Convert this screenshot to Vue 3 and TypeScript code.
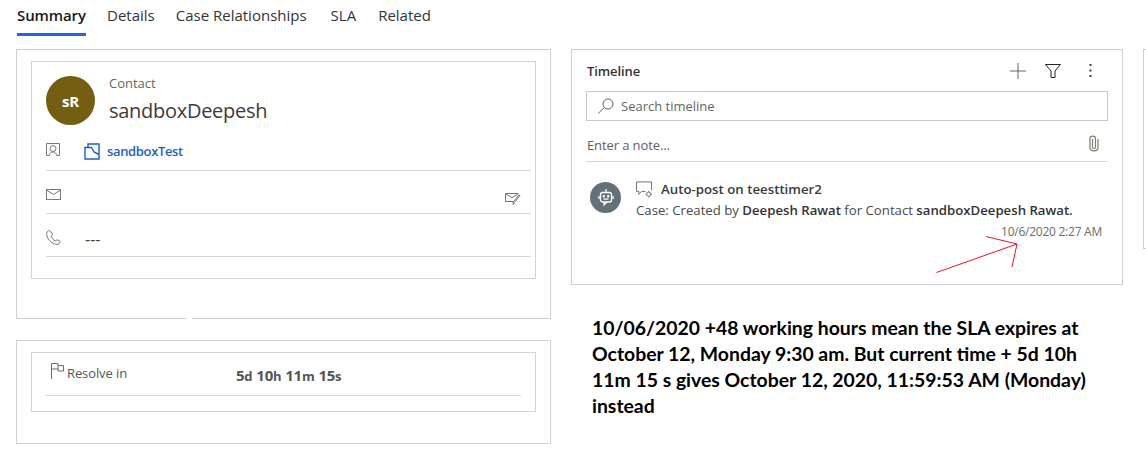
<script setup lang="ts">
interface Part { value: string; unit: string }
const tabs: string[] = ['Summary', 'Details', 'Case Relationships', 'SLA', 'Related']
const timer: Part[] = [
  { value: '5', unit: 'd' },
  { value: '10', unit: 'h' },
  { value: '11', unit: 'm' },
  { value: '15', unit: 's' },
]
</script>

<template>
  <div class="page">
    <nav class="tabs">
      <span v-for="(t, i) in tabs" :key="t" class="tab" :class="{ active: i === 0 }">{{ t }}</span>
    </nav>
    <div class="main">
      <div class="left">
        <section class="card top-card">
          <div class="inner contact">
            <div class="head">
              <div class="avatar">sR</div>
              <div class="who">
                <div class="label">Contact</div>
                <div class="name">sandboxDeepesh</div>
              </div>
            </div>
            <div class="row r1">
              <svg class="ic" width="14" height="14" viewBox="0 0 14 14" fill="none" stroke="#7d7672">
                <path d="M3 12.500H.5V.5h13v12H11" />
                <circle cx="7" cy="5.500" r="3" />
                <path d="M3 13c.5-2.500 2-4 4-4s3.500 1.500 4 4" />
              </svg>
              <svg class="link-ic" width="16" height="17" viewBox="0 0 16 17" fill="none" stroke="#1f5fbf" stroke-width="1.400">
                <path d="M4 4.500V1h11v15H1V4.500h6.500l2.500 4.500 5 2.500" />
              </svg>
              <span class="link">sandboxTest</span>
            </div>
            <div class="row r2">
              <svg width="15" height="11" viewBox="0 0 15 11" fill="none" stroke="#7d7672">
                <rect x="0.500" y="0.500" width="14" height="10" />
                <path d="M1 1.500l6.500 4 6.500-4" />
              </svg>
              <svg class="mail-edit" width="16" height="13" viewBox="0 0 16 13" fill="none" stroke="#77726e">
                <path d="M8 9.500H.5V1.500h13" />
                <path d="M1 2l6 3.500 6-3.500" />
                <path d="M15 3.500L9.500 10.500l-1.500 2 .3-2.500L13.800 3z" />
              </svg>
            </div>
            <div class="row r3">
              <svg class="ic" width="15" height="15" viewBox="0 0 15 15" fill="none" stroke="#7d7672">
                <path d="M2.500.8L.8 2.300c-.4 3 .7 6 2.700 8.300 2.300 2.500 5.500 4 8.500 3.800l2-1.700c.4-.4.400-1-.1-1.300l-2.300-1.500c-.4-.3-.9-.2-1.200.1l-.9 1c-1.800-.6-3.800-2.800-4.400-5l1.100-.8c.4-.3.500-.8.300-1.200L4 .9C3.600.4 3 .4 2.500.8z" />
              </svg>
              <span class="dash">---</span>
            </div>
          </div>
          <i class="notch"></i>
        </section>
        <section class="card sla-card">
          <div class="inner sla">
            <div class="sla-row">
              <svg class="flag" width="13" height="16" viewBox="0 0 13 16" fill="none" stroke="#6f6b68">
                <path d="M.5 16V.5h6.500v2h5.500v5.500H7V6H.5M7 2.500V6" />
              </svg>
              <span class="resolve">Resolve in</span>
              <span class="timer">
                <span v-for="p in timer" :key="p.unit" class="part">{{ p.value }}<small>{{ p.unit }}</small></span>
              </span>
            </div>
          </div>
        </section>
      </div>

      <div class="right">
        <section class="card timeline">
          <header class="tl-head">
            <span class="tl-title">Timeline</span>
            <div class="tl-tools">
              <svg class="plus" width="16" height="16" viewBox="0 0 16 16" stroke="#6b6460" fill="none"><path d="M0 8h16M8 0v16" /></svg>
              <svg class="funnel" width="16" height="14" viewBox="0 0 16 14" stroke="#1f1f33" fill="none"><path d="M.5.500h15L10 7v6.500H6V7z" /></svg>
              <svg class="dots" width="3" height="13" viewBox="0 0 3 13" fill="#3b3a4a"><rect x="0.500" y="0" width="2" height="2" /><rect x="0.500" y="5.500" width="2" height="2" /><rect x="0.500" y="11" width="2" height="2" /></svg>
            </div>
          </header>
          <div class="search">
            <svg width="18" height="16" viewBox="0 0 18 16" fill="none" stroke="#66615e"><circle cx="11" cy="6" r="5" /><path d="M7.500 9.500L1 15.500" /></svg>
            <span>Search timeline</span>
          </div>
          <div class="note">
            <span>Enter a note...</span>
            <svg class="clip" width="10" height="17" viewBox="0 0 10 17" fill="none" stroke="#7b7d6f" stroke-width="1.200"><path d="M3.500 4v8c0 2 3 2 3 0V3C6.500.5 1 .5 1 3v9.500c0 4.500 8 4.500 8 0V4" /></svg>
          </div>
          <article class="post">
            <div class="bot">
              <svg width="16" height="18" viewBox="0 0 16 18" fill="none" stroke="#fff" stroke-width="1.300">
                <path d="M8 0v3" />
                <rect x="2.500" y="3.500" width="11" height="9.500" rx="2" />
                <path d="M1 7v3M15 7v3M6 13v3l3-3" />
                <circle cx="5.800" cy="7.300" r=".6" fill="#fff" />
                <circle cx="10.200" cy="7.300" r=".6" fill="#fff" />
                <path d="M5.500 10h5" />
              </svg>
            </div>
            <div class="post-body">
              <div class="post-title">
                <svg width="17" height="17" viewBox="0 0 18 17" fill="none" stroke="#6e6a67">
                  <path d="M10 10.500H6l-3 3v-3H.5V.5h16v9" />
                  <circle cx="13.500" cy="13.500" r="2.200" />
                  <path d="M13.500 10v1.300M13.500 15.700V17M10 13.500h1.300M15.700 13.500H17" />
                </svg>
                <span>Auto-post on teesttimer2</span>
              </div>
              <div class="post-text">Case: Created by <b>Deepesh Rawat</b> for Contact <b>sandboxDeepesh Rawat.</b></div>
              <div class="post-time">10/6/2020 2:27 AM</div>
            </div>
          </article>
        </section>
        <p class="remark">10/06/2020 +48 working hours mean the SLA expires at October 12, Monday 9:30 am. But current time + 5d 10h 11m 15 s gives October 12, 2020, 11:59:53 AM (Monday) instead</p>
      </div>
      <section class="card stub"></section>
    </div>

    <svg class="arrow" width="100" height="50" viewBox="930 230 100 50" fill="none" stroke="#e8112d">
      <path d="M936.500 272.500L1017 244M986 236.500L1017 244L1012 267" />
    </svg>
  </div>
</template>

<style>
html, body { margin: 0; background: #fff; }
</style>

<style scoped>
.page {
  position: relative;
  width: 1146px;
  height: 463px;
  overflow: hidden;
  background: #fff;
  font-family: "Open Sans", "Noto Sans", sans-serif;
  color: #323130;
}
.tabs {
  display: flex;
  gap: 21px;
  height: 36px;
  padding-left: 17px;
  box-sizing: border-box;
}
.tab {
  height: 36px;
  box-sizing: border-box;
  padding-top: 5px;
  font-size: 15px;
  line-height: 20px;
  color: #333;
  white-space: nowrap;
}
.tab:nth-child(4) { margin-left: 3px; }
.tab:nth-child(5) { margin-left: 1px; }
.tab.active {
  width: 69px;
  font-weight: 600;
  letter-spacing: -0.1px;
  color: #1a1a1a;
  border-bottom: 3px solid #2266e3;
}
.main {
  display: flex;
  gap: 20px;
  padding: 13px 0 0 16px;
}
.card {
  border: 1px solid #cfcfcf;
  box-sizing: border-box;
  position: relative;
}
.left {
  width: 535px;
  flex: none;
  display: flex;
  flex-direction: column;
  gap: 21px;
}
.top-card {
  height: 270px;
  padding: 11px 14px 0;
}
.inner {
  border: 1px solid #d4d4d4;
  box-sizing: border-box;
}
.contact {
  height: 218px;
  padding: 0 4px 0 14px;
}
.head {
  display: flex;
  gap: 14px;
  height: 81px;
  padding-top: 14px;
  box-sizing: border-box;
}
.avatar {
  width: 49px;
  height: 49px;
  border-radius: 50%;
  background: #745e11;
  color: #fff;
  font-weight: 700;
  font-size: 15px;
  letter-spacing: -0.3px;
  display: flex;
  align-items: center;
  justify-content: center;
}
.label {
  font-size: 13px;
  line-height: 16px;
  color: #666;
  margin-top: -1px;
}
.name {
  font-size: 20px;
  line-height: 28px;
  margin-top: 6px;
  color: #3e3c3b;
  letter-spacing: -0.28px;
}
.row {
  display: flex;
  align-items: center;
  border-bottom: 1px solid #d6d6d6;
  box-sizing: border-box;
}
.r1 { height: 28px; align-items: flex-start; }
.r2 {
  height: 43px;
  align-items: flex-start;
  justify-content: space-between;
  padding: 18px 10px 0 0;
}
.r3 { height: 43px; align-items: flex-start; padding-top: 16px; }
.link-ic { margin-left: 24px; margin-right: 7px; }
.link {
  font-size: 13px;
  font-weight: 600;
  line-height: 16px;
  color: #1f5fbf;
  letter-spacing: -0.35px;
}
.mail-edit { margin-top: 3px; }
.dash {
  margin-left: 24px;
  font-size: 16px;
  line-height: 20px;
  margin-top: -1px;
  color: #444;
}
.notch {
  position: absolute;
  left: 169px;
  bottom: -1px;
  width: 6px;
  height: 1px;
  background: #fff;
}
.sla-card {
  height: 104px;
  padding: 11px 14px 0;
}
.sla {
  height: 60px;
  padding: 0 14px 0 14px;
}
.sla-row {
  height: 43px;
  display: flex;
  align-items: flex-start;
  border-bottom: 1px solid #d6d6d6;
  box-sizing: border-box;
  padding: 10px 0 0 5px;
}
.flag { margin-right: 3px; }
.resolve {
  font-size: 13px;
  line-height: 20px;
  color: #555;
  width: 169px;
  letter-spacing: -0.1px;
}
.timer {
  display: flex;
  gap: 4px;
  font-size: 15px;
  font-weight: 700;
  line-height: 24px;
  color: #555;
  letter-spacing: -0.25px;
}
.timer small { font-size: 13px; }
.right {
  width: 552px;
  flex: none;
}
.timeline {
  height: 236px;
  padding: 0 14px;
}
.tl-head {
  display: flex;
  justify-content: space-between;
  align-items: center;
  height: 41px;
}
.tl-title {
  padding-left: 1px;
  font-size: 13px;
  font-weight: 600;
  color: #333;
  letter-spacing: -0.1px;
}
.tl-tools {
  display: flex;
  align-items: center;
  gap: 20px;
  padding-right: 16px;
}
.plus { margin-right: -1px; }
.dots { margin-left: 8px; }
.search {
  height: 30px;
  border: 1px solid #c8c8c8;
  box-sizing: border-box;
  display: flex;
  align-items: center;
  gap: 6px;
  padding-left: 10px;
  font-size: 13px;
  color: #666;
}
.note {
  height: 41px;
  padding-top: 8px;
  border-bottom: 1px solid #d6d6d6;
  box-sizing: border-box;
  display: flex;
  align-items: center;
  justify-content: space-between;
  padding-right: 9px;
  padding-left: 1px;
  font-size: 13px;
  color: #605e5c;
  letter-spacing: -0.1px;
}
.clip { margin-bottom: 4px; }
.post {
  display: flex;
  gap: 15px;
  padding: 20px 5px 0 4px;
}
.bot {
  width: 31px;
  height: 31px;
  border-radius: 50%;
  background: #637279;
  display: flex;
  align-items: center;
  justify-content: center;
  flex: none;
}
.post-body { flex: 1; margin-top: -3px; }
.post-title {
  display: flex;
  align-items: center;
  gap: 8px;
  height: 20px;
  font-size: 13.250px;
  font-weight: 600;
  color: #3a3a3a;
}
.post-text {
  font-size: 13.200px;
  line-height: 20px;
  margin-top: 1px;
  color: #4a4a4a;
  white-space: nowrap;
}
.post-text b { font-weight: 600; color: #333; }
.post-time {
  font-size: 12px;
  line-height: 16px;
  margin-top: 4px;
  padding-right: 1px;
  text-align: right;
  color: #6c6c6c;
  letter-spacing: -0.25px;
}
.remark {
  margin: 30px 0 0 21px;
  width: 510px;
  font-family: Lato, "Open Sans", sans-serif;
  font-weight: 700;
  font-size: 19.400px;
  line-height: 26px;
  color: #000;
}
.stub {
  width: 40px;
  height: 200px;
  flex: none;
  border-right: none;
}
.arrow {
  position: absolute;
  left: 930px;
  top: 230px;
}
</style>
